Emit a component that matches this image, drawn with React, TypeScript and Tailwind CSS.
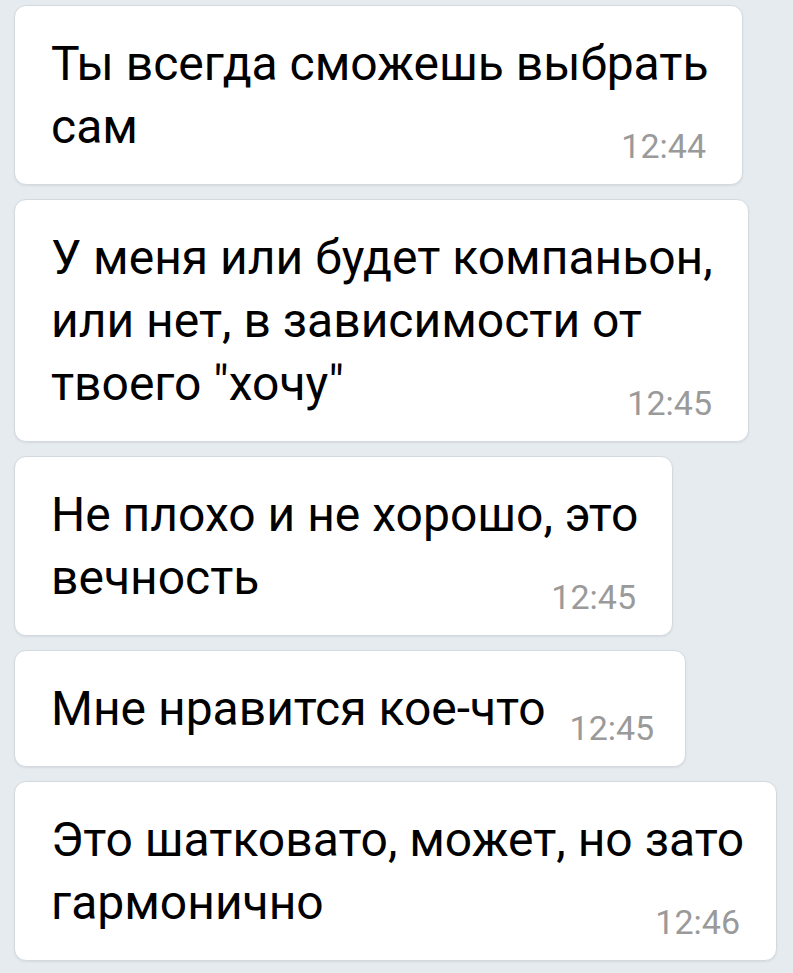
import React from "react";

type Msg = { lines: string[]; time: string; w: string };

const msgs: Msg[] = [
  { lines: ["Ты всегда сможешь выбрать", "сам"], time: "12:44", w: "w-[729px]" },
  {
    lines: ["У меня или будет компаньон,", "или нет, в зависимости от", "твоего \"хочу\""],
    time: "12:45",
    w: "w-[735px]",
  },
  { lines: ["Не плохо и не хорошо, это", "вечность"], time: "12:45", w: "w-[659px]" },
  { lines: ["Мне нравится кое-что"], time: "12:45", w: "w-[672px]" },
  { lines: ["Это шатковато, может, но зато", "гармонично"], time: "12:46", w: "w-[763px]" },
];

function Bubble({ m }: { m: Msg }) {
  const last = m.lines[m.lines.length - 1];
  const rest = m.lines.slice(0, -1);
  return (
    <div
      className={`${m.w} rounded-[12px] bg-white border border-[#d3dadf] shadow-[0_1px_2px_rgba(60,80,100,0.10)] pl-[36px] pr-[36px] py-[26px] text-[48px] leading-[63px] text-black whitespace-nowrap`}
    >
      {rest.map((l, i) => (
        <div key={i}>{l}</div>
      ))}
      <div className="flex items-end justify-between gap-[24px]">
        <span>{last}</span>
        <span className="text-[34px] leading-[34px] text-[#9a9a9a] mb-[-5px]">{m.time}</span>
      </div>
    </div>
  );
}

export default function App() {
  return (
    <div
      className="w-[793px] h-[973px] bg-[#e6ebef] pl-[14px] pt-[5px] flex flex-col gap-[14px] overflow-hidden"
      style={{ fontFamily: "Roboto, 'Noto Sans', sans-serif" }}
    >
      {msgs.map((m, i) => (
        <Bubble key={i} m={m} />
      ))}
    </div>
  );
}
